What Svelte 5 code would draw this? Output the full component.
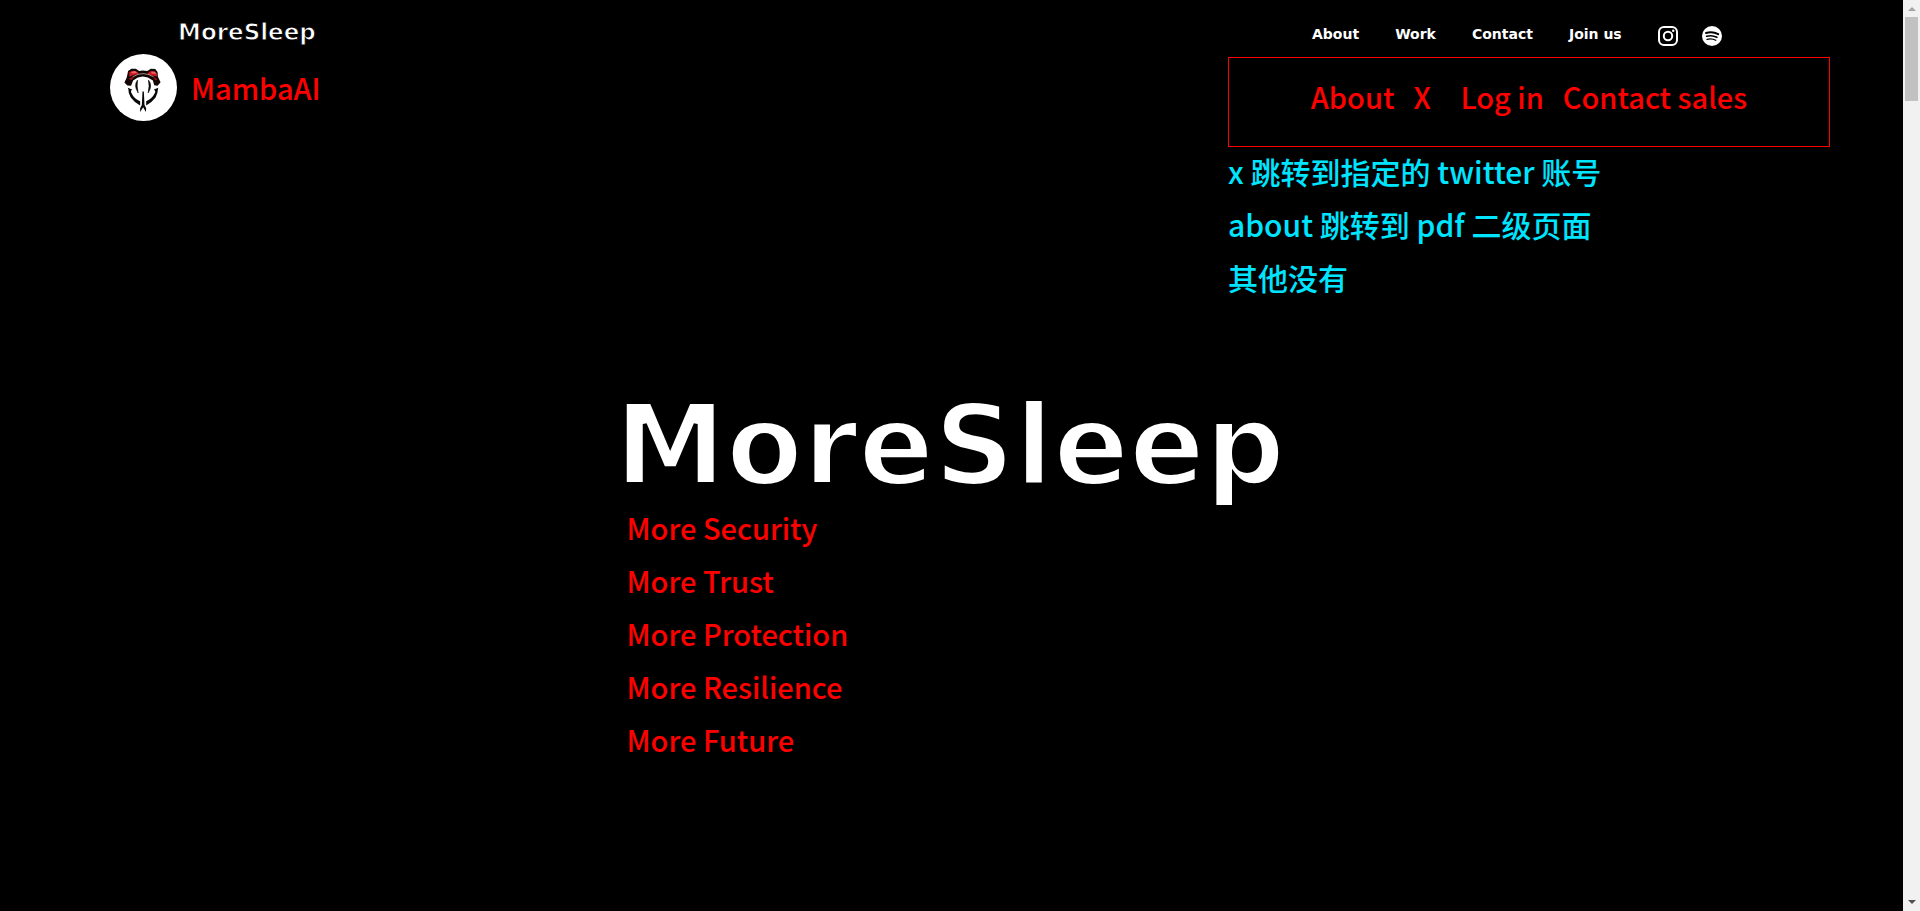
<script>
  const siteLinks = ['About', 'Work', 'Contact', 'Join us'];
  const productLinks = ['About', 'X', 'Log in', 'Contact sales'];
  const notes = ['x 跳转到指定的 twitter 账号', 'about 跳转到 pdf 二级页面', '其他没有'];
  const promises = ['More Security', 'More Trust', 'More Protection', 'More Resilience', 'More Future'];
</script>

<div class="window">
  <div class="page">
    <header>
      <div class="brand">
        <a class="wordmark" href="#home">MoreSleep</a>
        <a class="mamba annotation" href="#mamba">
          <svg class="badge" viewBox="15 12 200 200" aria-hidden="true">
            <circle cx="115" cy="112" r="100" fill="#fff" />
            <path d="M58 97 L65 82 L69 63 L79 56 L92 56 L102 63 L113 61 L126 63 L137 56 L150 57 L157 66 L158 80 L166 96 L157 107 L147 105 L143 91 L128 82 L113 79 L98 82 L84 91 L78 107 L67 106Z" fill="#140505" />
            <path d="M72 67 Q84 57 97 66 L101 72 L86 75 L73 80Z M130 67 Q143 57 155 70 L155 79 L141 76 L127 73Z" fill="#c91820" />
            <path d="M77 66 L89 63 L97 69 L83 70Z M138 65 L149 65 L153 72 L139 70Z" fill="#f06064" />
            <path d="M70 86 L88 78 L80 90Z M144 79 L158 89 L149 90Z" fill="#8e1518" />
            <path d="M83 80 Q113 61 145 80" fill="none" stroke="#e6c8c8" stroke-width="2" />
            <path d="M68 113 L81 118 Q75 123 80 130 Q86 145 105 153 L105 166 Q89 158 77 142 Q69 129 70 118Z M159 113 L146 118 Q153 123 148 130 Q141 145 123 153 L123 166 Q139 158 151 142 Q158 129 158 118Z" fill="#080808" />
            <path d="M97 90 Q85 106 99 128 Q94 107 97 90Z M130 90 Q143 106 129 128 Q134 107 130 90Z" fill="#080808" stroke="#080808" stroke-width="2" />
            <path d="M112 124 L116 124 L118 164 L123 174 L122 185 L114 171 L105 185 L105 174 L110 164Z" fill="#080808" />
          </svg>
          <span>MambaAI</span>
        </a>
      </div>

      <div class="side">
        <nav class="site" aria-label="Site">
          {#each siteLinks as label}
            <a href="#{label}">{label}</a>
          {/each}
          <span class="social">
            <a href="#instagram" aria-label="Instagram">
              <svg viewBox="0 0 20 20" fill="none" stroke="#fff" stroke-width="2">
                <rect x="1" y="1" width="18" height="18" rx="5" />
                <circle cx="10" cy="10" r="4.2" />
                <circle cx="15.2" cy="4.8" r="1.2" fill="#fff" stroke="none" />
              </svg>
            </a>
            <a href="#spotify" aria-label="Spotify">
              <svg viewBox="0 0 20 20" fill="none" stroke="#000" stroke-linecap="round">
                <circle cx="10" cy="10" r="10" fill="#fff" stroke="none" />
                <path d="M4 7 Q10.500 5 16.200 8.200" stroke-width="1.900" />
                <path d="M4.600 10.300 Q10 8.700 14.900 11.300" stroke-width="1.600" />
                <path d="M5 13.300 Q9.800 12 13.800 14.300" stroke-width="1.300" />
              </svg>
            </a>
          </span>
        </nav>
        <nav class="product annotation" aria-label="Product">
          {#each productLinks as label}
            <a href="#{label}">{label}</a>
          {/each}
        </nav>
        <div class="notes">
          {#each notes as note}
            <p>{note}</p>
          {/each}
        </div>
      </div>
    </header>

    <main>
      <h1>MoreSleep</h1>
      <ul class="annotation">
        {#each promises as promise}
          <li>{promise}</li>
        {/each}
      </ul>
    </main>
  </div>

  <div class="scrollbar" aria-hidden="true">
    <svg viewBox="0 0 17 17"><path d="M5 11 L9 7 L13 11Z" fill="#a3a3a3" /></svg>
    <div class="thumb"></div>
    <svg viewBox="0 0 17 17"><path d="M5 6 L13 6 L9 10Z" fill="#505050" /></svg>
  </div>
</div>

<style>
  :global(body) {
    margin: 0;
    background: #000;
  }

  .window {
    display: flex;
    height: 100vh;
    overflow: hidden;
    background: #000;
    color: #fff;
    font-family: 'DejaVu Sans', sans-serif;
    font-weight: 700;
  }

  .page {
    flex: 1;
    min-width: 0;
  }

  a {
    color: inherit;
    text-decoration: none;
  }

  p,
  h1,
  ul {
    margin: 0;
    padding: 0;
  }

  .annotation,
  .notes {
    font-family: 'Noto Sans CJK SC', sans-serif;
    font-weight: 500;
  }

  .annotation {
    font-size: 29px;
    line-height: 53px;
    color: #f00;
  }

  header {
    display: flex;
    justify-content: space-between;
    padding: 16px 73px 0 110px;
  }

  .brand {
    display: flex;
    flex-direction: column;
    gap: 6px;
  }

  .wordmark {
    margin-left: 68px;
    font-size: 23px;
    line-height: 32px;
    -webkit-text-stroke: 1px #000;
  }

  .mamba {
    display: flex;
    align-items: center;
    gap: 14px;
  }

  .badge {
    width: 67px;
    height: 67px;
  }

  .side {
    width: 35%;
  }

  .site {
    display: flex;
    align-items: center;
    gap: 36px;
    height: 36px;
    margin-bottom: 5px;
    padding-left: 84px;
    font-size: 14px;
    line-height: 36px;
    white-space: nowrap;
  }

  .social {
    display: flex;
    gap: 24px;
    padding-top: 4px;
  }

  .social svg {
    display: block;
    width: 20px;
    height: 20px;
  }

  .product {
    display: flex;
    justify-content: center;
    gap: 19px;
    box-sizing: border-box;
    height: 90px;
    padding-top: 12px;
    border: 1px solid #f00;
    white-space: nowrap;
  }

  .product a {
    min-width: 28px;
  }

  .notes {
    display: flex;
    flex-direction: column;
    gap: 5px;
    font-size: 30px;
    line-height: 48px;
    color: #00e5ff;
  }

  main {
    width: 674px;
    margin: 88px auto 0;
  }

  h1 {
    font-size: 112px;
    line-height: 112px;
    -webkit-text-stroke: 4px #000;
  }

  ul {
    padding-left: 12px;
    list-style: none;
  }

  .scrollbar {
    display: flex;
    flex-direction: column;
    width: 17px;
    background: #f1f1f1;
  }

  .scrollbar svg {
    width: 17px;
    height: 17px;
  }

  .scrollbar svg:last-child {
    margin-top: auto;
  }

  .thumb {
    height: 84px;
    margin: 0 2px;
    background: #c1c1c1;
  }
</style>
